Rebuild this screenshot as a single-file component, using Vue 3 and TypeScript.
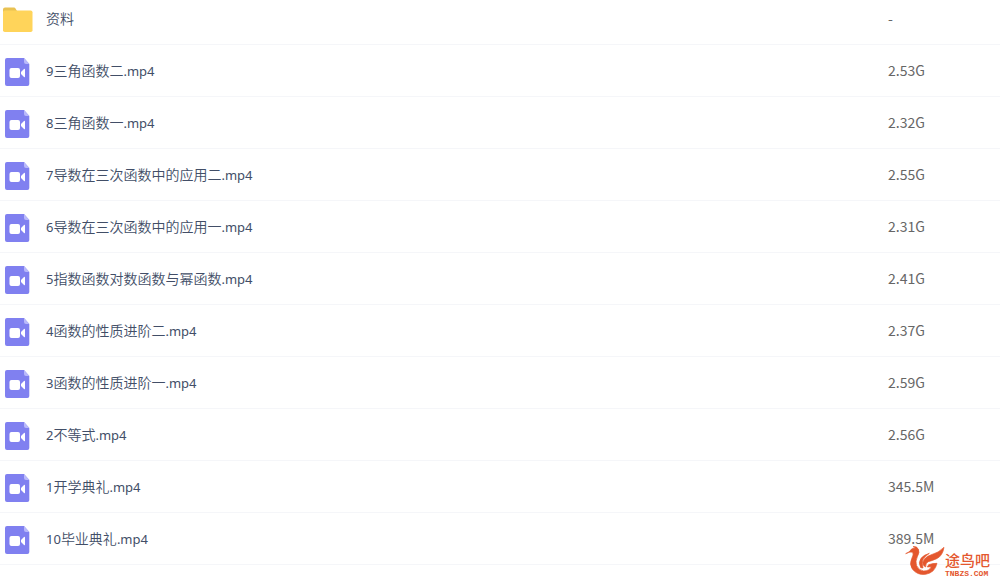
<script setup lang="ts">
interface Entry {
  kind: 'folder' | 'video'
  index: string
  title: string
  ext: string
  size: string
}

const video = (index: string, title: string, size: string): Entry => ({
  kind: 'video',
  index,
  title,
  ext: '.mp4',
  size,
})

const entries: Entry[] = [
  { kind: 'folder', index: '', title: '资料', ext: '', size: '-' },
  video('9', '三角函数二', '2.53G'),
  video('8', '三角函数一', '2.32G'),
  video('7', '导数在三次函数中的应用二', '2.55G'),
  video('6', '导数在三次函数中的应用一', '2.31G'),
  video('5', '指数函数对数函数与幂函数', '2.41G'),
  video('4', '函数的性质进阶二', '2.37G'),
  video('3', '函数的性质进阶一', '2.59G'),
  video('2', '不等式', '2.56G'),
  video('1', '开学典礼', '345.5M'),
  video('10', '毕业典礼', '389.5M'),
]
</script>

<template>
  <main class="page">
    <table class="files">
      <tbody>
        <tr v-for="entry in entries" :key="entry.index + entry.title">
          <td class="name">
            <div class="label">
              <svg v-if="entry.kind === 'folder'" class="icon" viewBox="0 0 34 34" aria-hidden="true">
                <path d="M3 11V8.500q0-2 2-2h9q1 0 1.500 1l1.500 2.500v2z" fill="#e9c252" />
                <rect x="3" y="9.500" width="29.500" height="21.500" rx="1.800" fill="#ffd45a" />
              </svg>
              <svg v-else class="icon" viewBox="0 0 34 34" aria-hidden="true">
                <path d="M7 4h17l5.300 6v20q0 2-2 2H7q-2 0-2-2V6q0-2 2-2z" fill="#8080f0" />
                <path d="M24 4l5.300 6H26q-2 0-2-2z" fill="#b9b9fa" />
                <rect x="9.500" y="14" width="10.500" height="10" rx="2" fill="#fff" />
                <path d="M21 18l3-3q1-.6 1 .5v7q0 1.100-1 .5l-3-3z" fill="#fff" />
              </svg>
              <span class="text"><span class="latin">{{ entry.index }}</span>{{ entry.title }}<span class="latin">{{ entry.ext }}</span></span>
            </div>
          </td>
          <td class="size">{{ entry.size }}</td>
        </tr>
      </tbody>
    </table>
    <div class="brand">
      <svg class="bird" viewBox="0 0 120 96" aria-hidden="true">
        <g fill="#e4572e" stroke="#e4572e" stroke-width="2" stroke-linejoin="round">
          <path d="M2 23q9-3 13-9 6-9 16-7-1-4-7-5 11-2 16 7 5 10-3 23-7 14-2 27 6 14 21 16 17 0 23-13l-12 1 4-7q12-4 25-4-6 28-34 33-26 3-40-16-10-15-2-31 7-13 3-19-6-4-21 4z" />
          <path d="M117 4q-4 26-22 34-13 6-25 9-9 4-8 16-9-3-8-14 3-15 23-22 25-7 40-23z" />
          <path d="M47 65q-8-16 1-28 8-10 25-15-16 10-20 21-2 10 1 23z" />
        </g>
      </svg>
      <div class="words">
        <span class="brand-name">途鸟吧</span>
        <span class="domain">TNBZS.COM</span>
      </div>
    </div>
  </main>
</template>

<style>
body {
  margin: 0;
  background: #fff;
}
</style>

<style scoped>
.page {
  position: relative;
  min-height: 100vh;
  overflow: hidden;
  font-family: "Noto Sans CJK SC", sans-serif;
}

.files {
  width: 100%;
  table-layout: fixed;
  border-collapse: separate;
  border-spacing: 0;
}

td {
  box-sizing: border-box;
  height: 52px;
  padding: 0;
  border-bottom: 1px solid #f5f6f9;
  vertical-align: middle;
}

tr:first-child td {
  height: 45px;
  padding-bottom: 8px;
}

.label {
  display: flex;
  align-items: center;
  gap: 12px;
}

.icon {
  flex: none;
  width: 34px;
  height: 34px;
}

.text {
  color: #424e67;
  font-size: 14px;
  font-weight: 350;
  line-height: 20px;
  white-space: nowrap;
}

.latin {
  font-family: "Noto Sans", sans-serif;
  font-size: 13px;
  font-weight: 400;
}

.size {
  width: 112px;
  padding-bottom: 2px;
  color: #666;
  font-size: 14px;
  line-height: 20px;
}

.brand {
  position: absolute;
  right: 9px;
  bottom: 2px;
  display: flex;
  align-items: flex-start;
  color: #e4572e;
}

.bird {
  width: 40px;
  height: 32px;
}

.words {
  display: flex;
  flex-direction: column;
  width: 46px;
  padding-top: 5px;
}

.brand-name {
  font-size: 15px;
  font-weight: 500;
  line-height: 18px;
}

.domain {
  font-family: "Liberation Mono", monospace;
  font-size: 8px;
  font-weight: 700;
  line-height: 9px;
}
</style>
